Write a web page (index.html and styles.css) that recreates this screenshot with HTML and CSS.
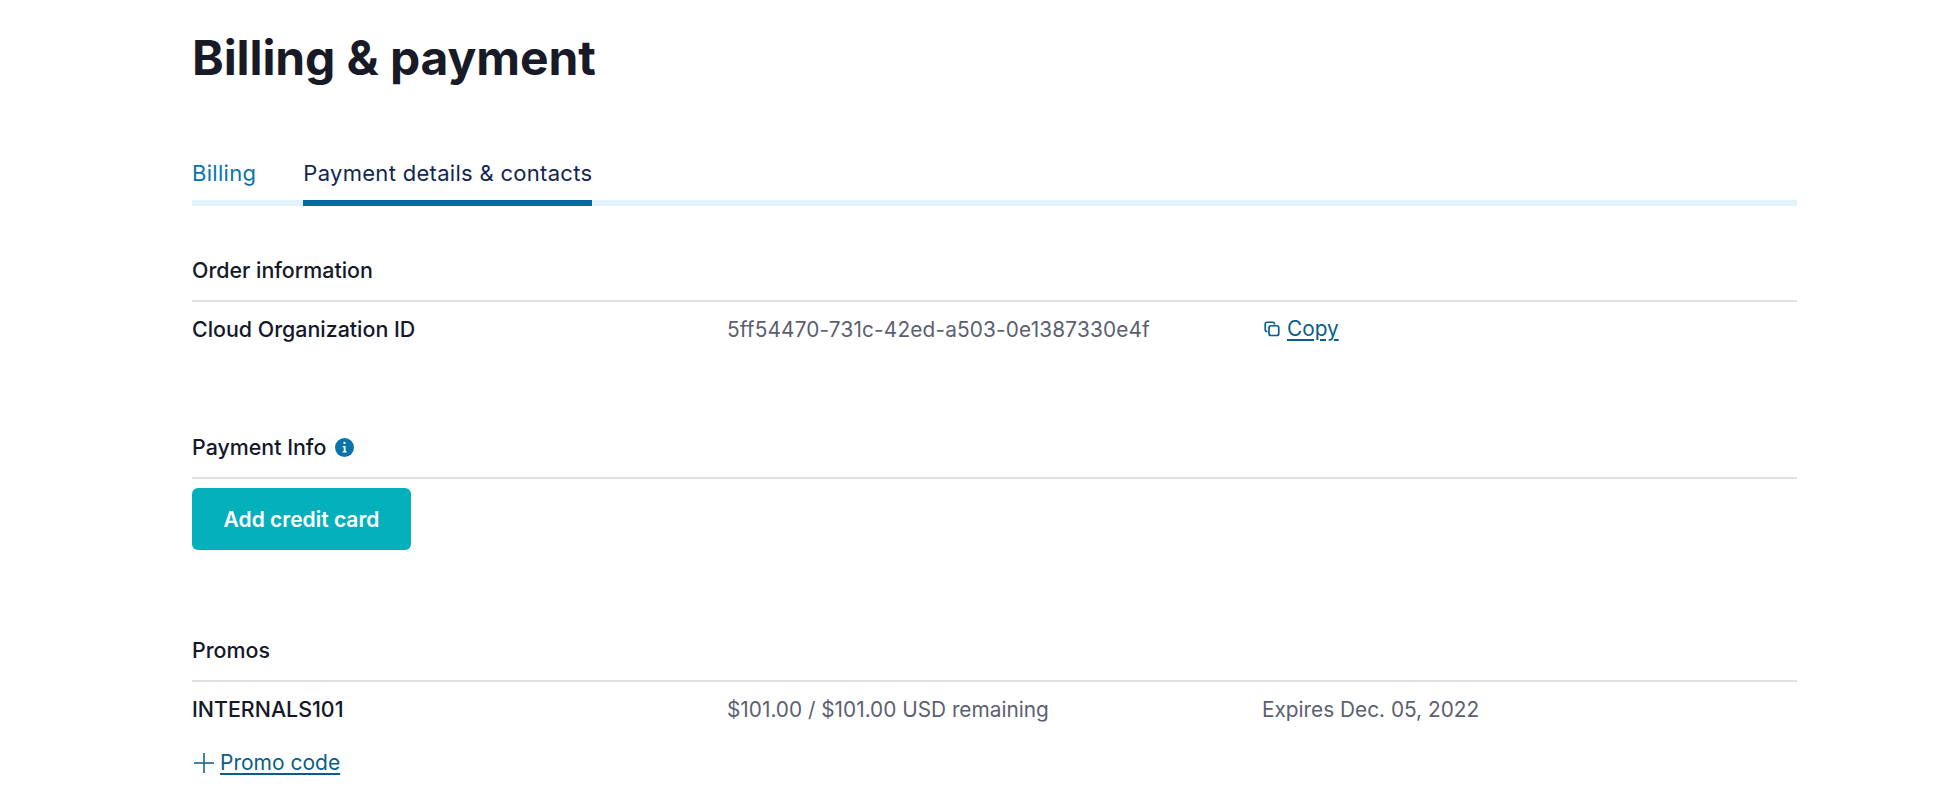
FILE: index.html
```html
<!DOCTYPE html>
<html lang="en">
<head>
  <meta charset="UTF-8" />
  <title>Billing &amp; payment</title>
  <link rel="stylesheet" href="styles.css">
</head>
<body>
  <main class="page">
    <h1 class="page-title">Billing &amp; payment</h1>

    <nav class="tabs">
      <a class="tab" href="#">Billing</a>
      <a class="tab tab-active" href="#">Payment details &amp; contacts</a>
    </nav>

    <section class="section section-order">
      <h2 class="section-title">Order information</h2>
      <div class="row">
        <div class="row-label">Cloud Organization ID</div>
        <div class="row-value org-id">5ff54470-731c-42ed-a503-0e1387330e4f</div>
        <div class="row-value">
          <a class="link copy-link" href="#">
            <svg class="copy-icon" width="16" height="16" viewBox="0 0 16 16" fill="none" stroke="currentColor" stroke-width="1.7">
              <path d="M3.5 10.5H3A1.75 1.75 0 0 1 1.25 8.75V3A1.75 1.75 0 0 1 3 1.25H8.750A1.75 1.75 0 0 1 10.500 3V3.500"/>
              <rect x="5" y="4.750" width="9.750" height="9.750" rx="2"/>
            </svg>
            <span class="link-text">Copy</span>
          </a>
        </div>
      </div>
    </section>

    <section class="section section-payment">
      <h2 class="section-title">
        Payment Info
        <svg class="info-icon" width="19" height="19" viewBox="0 0 18 18">
          <circle cx="9" cy="9" r="9" fill="#0a74a8"/>
          <rect x="7.9" y="3.6" width="2.2" height="2.2" rx="1.1" fill="#fff"/>
          <path d="M7.200 7.600h2.800v5h1v1.200H7.200v-1.200h1.100V8.800H7.200z" fill="#fff"/>
        </svg>
      </h2>
      <button class="primary-btn">Add credit card</button>
    </section>

    <section class="section section-promos">
      <h2 class="section-title">Promos</h2>
      <div class="row">
        <div class="row-label">INTERNALS101</div>
        <div class="row-value">$101.00 / $101.00 USD remaining</div>
        <div class="row-value">Expires Dec. 05, 2022</div>
      </div>
      <a class="link promo-link" href="#">
        <svg width="22" height="22" viewBox="0 0 22 22" stroke="currentColor" stroke-width="1.500">
          <path d="M11 1v20M1 11h20"/>
        </svg>
        <span class="link-text">Promo code</span>
      </a>
    </section>
  </main>
</body>
</html>
```

FILE: styles.css
```css
body {
  margin: 0;
  font-family: Inter, "Liberation Sans", sans-serif;
  background: #fff;
  color: #14182b;
}

.page {
  width: 1605px;
  margin-left: 192px;
}

.page-title {
  margin: 0;
  padding-top: 29px;
  font-size: 48px;
  line-height: 58px;
  font-weight: 700;
  letter-spacing: -0.1px;
  color: #191a27;
}

.tabs {
  display: flex;
  gap: 47px;
  margin-top: 71px;
  border-bottom: 6px solid #e1f3f9;
}

.tab {
  margin-bottom: -6px;
  padding-bottom: 12px;
  border-bottom: 6px solid transparent;
  font-size: 22px;
  line-height: 30px;
  letter-spacing: 0.3px;
  color: #0a74a8;
  text-decoration: none;
}

.tab-active {
  border-bottom-color: #066a99;
  color: #12264f;
}

.section-order {
  margin-top: 52px;
}

.section-payment {
  margin-top: 93px;
}

.section-promos {
  margin-top: 88px;
}

.section-title {
  display: flex;
  align-items: center;
  gap: 9px;
  margin: 0;
  padding-bottom: 18px;
  border-bottom: 2px solid #e0e0e3;
  font-size: 21.4px;
  line-height: 24px;
  font-weight: 500;
  color: #14182b;
}

.row {
  display: grid;
  grid-template-columns: repeat(3, 1fr);
  align-items: baseline;
  padding-top: 15px;
  font-size: 21.4px;
  line-height: 24px;
}

.row-label {
  font-weight: 500;
}

.row-value {
  font-size: 20.8px;
  color: #5c5f70;
}

.org-id {
  letter-spacing: 0.16px;
}

.link {
  display: inline-flex;
  align-items: center;
  color: #0b5e88;
  text-decoration: none;
}

.link-text {
  text-decoration: underline;
  text-underline-offset: 3px;
  text-decoration-thickness: 1.5px;
}

.copy-link {
  gap: 7px;
  margin-left: 2px;
}

.primary-btn {
  display: block;
  width: 219px;
  height: 62px;
  margin-top: 9px;
  padding: 0;
  border: none;
  border-radius: 6px;
  background: #05b0bd;
  color: #fff;
  font-family: inherit;
  font-size: 21px;
  font-weight: 600;
}

.promo-link {
  gap: 5px;
  margin-top: 27px;
  margin-left: 1px;
  font-size: 21px;
  line-height: 28px;
}
```
